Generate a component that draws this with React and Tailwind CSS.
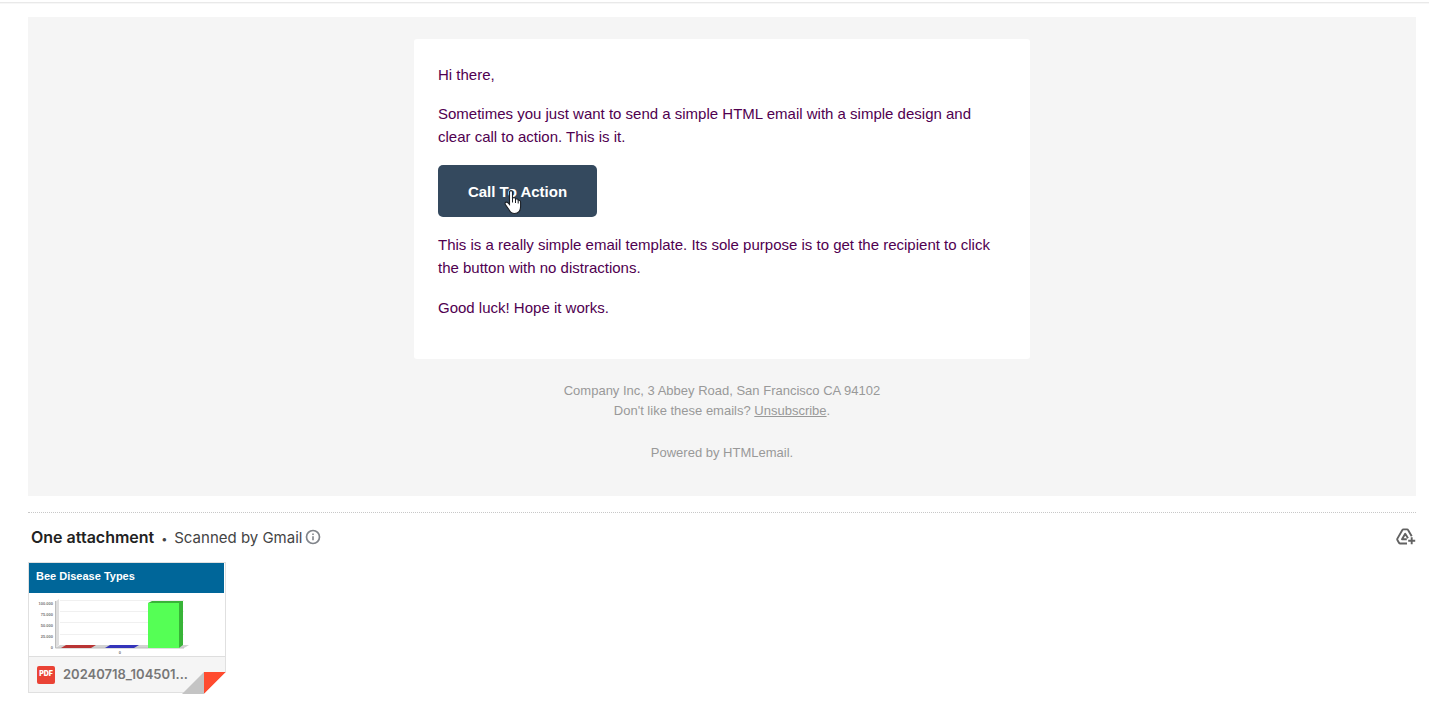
function InfoIcon() {
  return (
    <svg viewBox="0 0 16 16" className="size-4" fill="none" aria-hidden="true">
      <circle cx="8" cy="8" r="6.500" stroke="#80848a" strokeWidth="1.700" />
      <path d="M8 7.200v4" stroke="#80848a" strokeWidth="1.600" />
      <path d="M8 4.400v1.600" stroke="#80848a" strokeWidth="1.600" />
    </svg>
  );
}

function DriveAddIcon() {
  return (
    <svg viewBox="0 0 20 20" className="size-5" fill="none" stroke="#626262" strokeWidth="1.900" strokeLinejoin="round" aria-hidden="true">
      <path d="M11 16.500H4.200Q3.500 16.500 3.100 15.900L1.400 13Q1 12.300 1.400 11.600L6.200 3.200Q6.700 2.400 7.500 2.400H11Q11.800 2.400 12.200 3.200L15.700 9.300" />
      <path d="M10.800 12.300H6L9.200 6.700l2.800 4.600" />
      <path d="M15.700 10.200v7M12.200 13.700h7" />
    </svg>
  );
}

function HandCursor() {
  return (
    <svg viewBox="0 0 18 26" className="pointer-events-none absolute left-[66px] top-6 h-[26px] w-[18px]" aria-hidden="true">
      <path
        d="M5.500 3.200Q5.500 1.600 7 1.600T8.500 3.200V9Q11.300 8.200 11.500 10Q14 9.400 14.200 11.300Q16.600 11 16.600 13.500V17.500Q16.600 24.500 10.500 24.500Q7 24.500 5.200 21L1.200 15.300Q.7 13.400 2.300 13.100Q3.700 13 5.500 15.300Z"
        fill="#fff"
        stroke="#1c2026"
        strokeWidth="1.1"
      />
      <path d="M8.500 9v4.500M11.500 10v4M14.200 11.500v3" stroke="#1c2026" strokeWidth="1" />
    </svg>
  );
}

function ChartPreview() {
  return (
    <svg viewBox="0 0 196 63" className="block w-full" role="img" aria-label="Bar chart of bee disease types">
      <path d="M31 7.500H155M31 18.500H155M31 29.500H155M31 41.500H155" stroke="#f0f0f0" />
      <path d="M26 9l4-3v46l-4 3z" fill="#dedede" />
      <path d="M26 55l5-3h129l-5 3z" fill="#d2d2d2" />
      <path d="M26.500 8v47H155" fill="none" stroke="#bdbdbd" />
      <path d="M32 55l5-3h30l-5 3z" fill="#b93434" />
      <path d="M76 55l5-3h29l-5 3z" fill="#3434ba" />
      <path d="M119 10l4-2h31v44l-4 3z" fill="#38b438" />
      <path d="M119 10h31v45h-31z" fill="#55ff55" />
      <g fill="#777" fontFamily="Liberation Sans, sans-serif" fontSize="4" fontWeight="700" textAnchor="end">
        <text x="24" y="12">100.000</text>
        <text x="24" y="23">75.000</text>
        <text x="24" y="34">50.000</text>
        <text x="24" y="45">25.000</text>
        <text x="24" y="56">0</text>
        <text x="92" y="61">0</text>
      </g>
    </svg>
  );
}

function Attachment() {
  return (
    <a href="#attachment" className="relative block w-[198px] border border-[#e0e0e0] bg-white">
      <div className="mr-px h-[30px] bg-[#006699] px-[7px] font-['Liberation_Sans',sans-serif] text-[11px] font-bold leading-[27px] text-white">
        Bee Disease Types
      </div>
      <ChartPreview />
      <div className="flex h-9 items-center gap-2 border-t border-[#dedede] bg-[#f5f5f5] pl-2">
        <span className="flex h-[18px] w-[18px] items-center justify-center rounded-xs bg-[#ea4335] font-['Inter',sans-serif] text-[7px] font-black text-white">
          PDF
        </span>
        <span className="font-['Inter',sans-serif] text-[13px] font-semibold text-[#777]">20240718_104501...</span>
      </div>
      <svg viewBox="0 0 44 22" className="absolute -bottom-0.5 -right-px h-[22px] w-11" aria-hidden="true">
        <path d="M0 22L22 0v22z" fill="#c4c4c4" />
        <path d="M22 0h22L22 22z" fill="#ff4b2f" />
        <path d="M44 0v22H22z" fill="#fff" />
      </svg>
    </a>
  );
}

export default function App() {
  return (
    <div className="min-h-screen bg-white">
      <div className="h-[17px] pt-0.5">
        <div className="h-0.5 border-t border-[#e9e9e9] bg-[#f7f7f7]" />
      </div>
      <main className="ml-7 mr-[13px]">
        <section className="bg-[#f5f5f5] px-4 pb-[33px] pt-[22px] font-['Liberation_Sans',sans-serif]">
          <article className="mx-auto max-w-[616px] rounded-[3px] bg-white px-6 pb-10 pt-6 text-[15px] leading-[23px] text-[#500050]">
            <p className="mb-4">Hi there,</p>
            <p className="mb-[17px]">
              Sometimes you just want to send a simple HTML email with a simple design and clear call to action. This is it.
            </p>
            <button className="relative mb-4 block h-[52px] min-w-[159px] cursor-pointer rounded-[5px] bg-[#34495e] px-7 font-bold text-white">
              Call To Action
              <HandCursor />
            </button>
            <p className="mb-[17px]">
              This is a really simple email template. Its sole purpose is to get the recipient to click the button with no distractions.
            </p>
            <p>Good luck! Hope it works.</p>
          </article>
          <footer className="pt-[22px] text-center text-[13px] leading-5 text-[#999]">
            <p>Company Inc, 3 Abbey Road, San Francisco CA 94102</p>
            <p>
              Don't like these emails? <a href="#unsubscribe" className="underline">Unsubscribe</a>.
            </p>
            <p className="mt-[22px]">Powered by HTMLemail.</p>
          </footer>
        </section>
        <section className="mt-4 border-t border-dotted border-[#c8c8c8]">
          <div className="flex h-[49px] items-center justify-between pb-px pl-[3px]">
            <div className="flex items-center gap-[3px]">
              <div className="flex items-baseline font-['Inter',sans-serif] text-[15px] text-[#444]">
                <h2 className="text-base font-semibold text-[#222]">One attachment</h2>
                <span className="w-5 text-center text-[11px]">•</span>
                <span>Scanned by Gmail</span>
              </div>
              <button aria-label="About scanning">
                <InfoIcon />
              </button>
            </div>
            <button aria-label="Add to Drive">
              <DriveAddIcon />
            </button>
          </div>
          <Attachment />
        </section>
      </main>
    </div>
  );
}
